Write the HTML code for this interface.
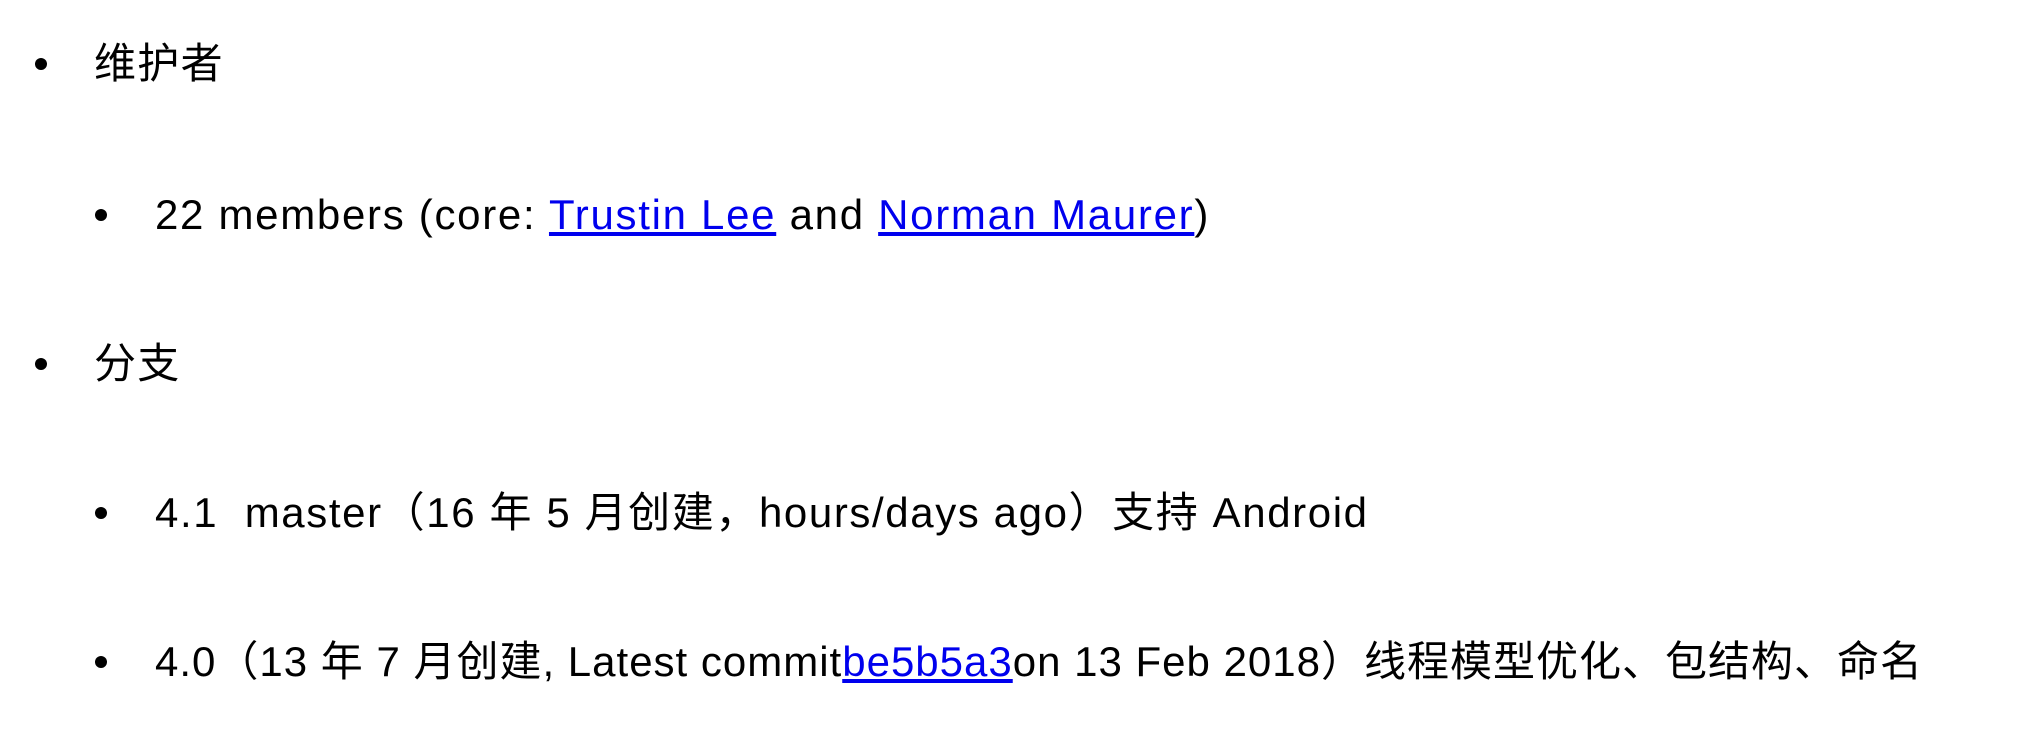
<!DOCTYPE html>
<html><head><meta charset="utf-8"><style>
html,body{margin:0;padding:0;background:#fff;width:2020px;height:742px;overflow:hidden}
body{font-family:"Liberation Sans","Noto Sans CJK SC",sans-serif;font-size:42px;color:#000;letter-spacing:1.3px}
.l{position:absolute;white-space:nowrap;line-height:48px}
.b{position:absolute;width:12px;height:12px;border-radius:50%;background:#000}
a{color:#0000ee;text-decoration:underline}
</style></head><body>
<div class="b" style="left:35px;top:58px"></div>
<div class="l" style="left:94px;top:40px">维护者</div>
<div class="b" style="left:95px;top:209px"></div>
<div class="l" style="left:155px;top:191px;letter-spacing:1.7px">22 members (core: <a>Trustin Lee</a> and <a>Norman Maurer</a>)</div>
<div class="b" style="left:35px;top:358px"></div>
<div class="l" style="left:94px;top:340px">分支</div>
<div class="b" style="left:95px;top:507px"></div>
<div class="l" style="left:155px;top:489px;letter-spacing:1.6px">4.1&nbsp; master（16 年 5 月创建，hours/days ago）支持 Android</div>
<div class="b" style="left:95px;top:656px"></div>
<div class="l" style="left:155px;top:638px;letter-spacing:1.0px">4.0（13 年 7 月创建, Latest commit<a>be5b5a3</a>on 13 Feb 2018）线程模型优化、包结构、命名</div>
</body></html>
